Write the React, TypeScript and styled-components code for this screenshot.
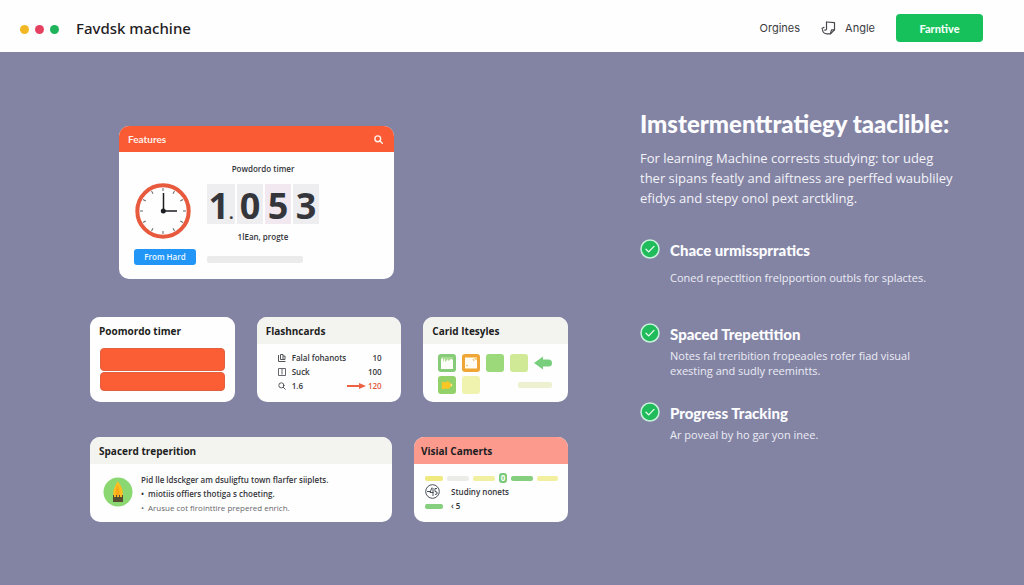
import React from "react";
import styled, { createGlobalStyle } from "styled-components";

const GlobalStyle = createGlobalStyle`
  * { box-sizing: border-box; }
  body {
    margin: 0;
    background: #8384a4;
    color: #26272b;
    font-family: "Open Sans", "Noto Sans", sans-serif;
  }
  h1, h2, h3, p, ul { margin: 0; padding: 0; }
  button { font-family: inherit; border: 0; cursor: pointer; }
`;

const Page = styled.div`
  min-height: 100vh;
  background: #8384a4;
`;

const Header = styled.header`
  display: flex;
  align-items: center;
  height: 52px;
  padding: 4px 41px 0 20px;
  background: #fefefe;
`;

const Dots = styled.div`
  display: flex;
  gap: 6px;
  padding-top: 3px;
`;

const Dot = styled.span<{ $color: string }>`
  width: 9px;
  height: 9px;
  border-radius: 50%;
  background: ${(p) => p.$color};
`;

const Brand = styled.span`
  margin-left: 17px;
  font-family: "Noto Sans", sans-serif;
  font-size: 15px;
  font-weight: 500;
  line-height: 20px;
  color: #1f2023;
`;

const Nav = styled.nav`
  display: flex;
  align-items: center;
  margin-left: auto;
`;

const NavLink = styled.a`
  display: flex;
  align-items: center;
  gap: 9px;
  margin-right: 21px;
  font-family: Inter, sans-serif;
  font-size: 11px;
  line-height: 16px;
  color: #3c3d42;
  text-decoration: none;
`;

const PrimaryButton = styled.button`
  height: 28px;
  width: 87px;
  border-radius: 4px;
  background: #16c15c;
  color: #f3fff7;
  font-family: Lato, sans-serif;
  font-size: 11px;
  font-weight: 900;
`;

const Main = styled.main`
  display: grid;
  grid-template-columns: minmax(0, 478fr) minmax(0, 320fr);
  gap: 72px;
  padding: 56px 64px 64px 90px;
`;

const Board = styled.div`
  display: flex;
  flex-direction: column;
  padding-top: 18px;
`;

const Card = styled.section`
  overflow: hidden;
  border-radius: 10px;
  background: #fefefe;
`;

const FeatureCard = styled(Card)`
  height: 153px;
  margin: 0 174px 38px 29px;
`;

const FeatureHead = styled.div`
  display: flex;
  align-items: center;
  justify-content: space-between;
  height: 26px;
  padding: 0 11px 0 9px;
  background: #fa5b35;
  color: #fff1ea;
`;

const FeatureTitle = styled.h2`
  font-family: Lato, sans-serif;
  font-size: 10px;
  font-weight: 700;
  line-height: 16px;
`;

const IconButton = styled.button`
  display: flex;
  padding: 0;
  background: none;
  color: inherit;
`;

const FeatureBody = styled.div`
  display: grid;
  grid-template-columns: 62px 112px;
  column-gap: 11px;
  padding: 10px 15px;
`;

const ClockColumn = styled.div`
  display: flex;
  flex-direction: column;
  align-items: flex-start;
  padding-top: 21px;
  gap: 10px;
`;

const BlueButton = styled.button`
  width: 62px;
  height: 16px;
  padding: 0;
  border-radius: 3px;
  background: #2196f6;
  color: #eef8ff;
  font-size: 8px;
  font-weight: 600;
  line-height: 16px;
`;

const TimerColumn = styled.div`
  display: flex;
  flex-direction: column;
  align-items: center;
`;

const Caption = styled.p`
  font-size: 8px;
  font-weight: 600;
  line-height: 14px;
  color: #34353a;
`;

const Digits = styled.div`
  display: grid;
  grid-template-columns: 28px repeat(3, 26px);
  gap: 2px;
  margin: 8px 0 6px;
`;

const Digit = styled.span<{ $tint?: string }>`
  height: 40px;
  background: ${(p) => p.$tint ?? "#eeedf0"};
  color: #35363b;
  font-size: 36px;
  font-weight: 700;
  line-height: 43px;
  text-align: center;
  small { font-size: 16px; }
`;

const Placeholder = styled.div`
  align-self: flex-start;
  width: 96px;
  height: 7px;
  margin-top: 12px;
  border-radius: 2px;
  background: #ebebeb;
`;

const TripleRow = styled.div`
  display: grid;
  grid-template-columns: repeat(3, minmax(0, 1fr));
  gap: 22px;
  margin-bottom: 35px;
`;

const DoubleRow = styled.div`
  display: grid;
  grid-template-columns: minmax(0, 302fr) minmax(0, 154fr);
  gap: 22px;
`;

const SmallCard = styled(Card)`
  height: 85px;
`;

const CardTitle = styled.h2<{ $background?: string; $inset?: number }>`
  height: 27px;
  padding: 1px ${(p) => p.$inset ?? 9}px 0;
  background: ${(p) => p.$background ?? "#f3f3f0"};
  color: #1c1d20;
  font-size: 10px;
  font-weight: 700;
  line-height: 27px;
  white-space: nowrap;
`;

const BlockStack = styled.div`
  display: flex;
  flex-direction: column;
  gap: 1px;
  padding: 4px 10px;
`;

const Block = styled.div<{ $height: number }>`
  height: ${(p) => p.$height}px;
  border: 1px solid #e0603f;
  border-radius: 4px;
  background: #fb5d35;
`;

const StatTable = styled.table`
  width: 104px;
  margin: 7px 0 0 21px;
  border-collapse: collapse;
  font-size: 8px;
  font-weight: 600;
  line-height: 14px;
  color: #34353a;
  td { height: 14px; padding: 0; white-space: nowrap; }
  td:first-child { width: 14px; }
  td:last-child { text-align: right; }
  svg { display: block; }
`;

const Total = styled.span`
  display: flex;
  align-items: center;
  justify-content: flex-end;
  gap: 2px;
  color: #e2583c;
`;

const Swatches = styled.div`
  display: grid;
  grid-template-columns: repeat(5, 18px);
  gap: 4px 6px;
  padding: 10px 0 0 15px;
`;

const Swatch = styled.span<{ $color: string; $border?: string }>`
  display: flex;
  align-items: center;
  justify-content: center;
  height: 18px;
  border: 3px solid ${(p) => p.$border ?? p.$color};
  border-radius: 3px;
  background: ${(p) => p.$color};
`;

const ArrowCell = styled.span`
  display: flex;
  align-items: center;
`;

const SwatchBar = styled.span`
  grid-column: 4 / 6;
  align-self: center;
  justify-self: end;
  width: 34px;
  height: 6px;
  border-radius: 2px;
  background: #eef1d0;
`;

const Note = styled.div`
  display: flex;
  gap: 8px;
  padding: 9px 12px 0 13px;
  font-size: 8px;
  font-weight: 600;
  line-height: 14px;
  color: #34353a;
  white-space: nowrap;
  svg { flex: none; margin-top: 4px; }
`;

const NoteList = styled.ul`
  list-style: none;
  li::before { content: "•"; margin-right: 4px; }
  li:last-child { color: #66676c; font-weight: 400; }
`;

const Segments = styled.div`
  display: grid;
  grid-template-columns: 18px 22px 22px 8px 22px 21px;
  align-items: center;
  justify-content: space-between;
  height: 12px;
  margin: 8px 10px 0 11px;
`;

const Segment = styled.span<{ $color: string }>`
  height: 5px;
  border-radius: 2px;
  background: ${(p) => p.$color};
`;

const Knob = styled.span`
  height: 10px;
  border-radius: 3px;
  background: #79c878;
  color: #ffffff;
  font-size: 8px;
  font-weight: 700;
  line-height: 10px;
  text-align: center;
`;

const Legend = styled.div`
  display: grid;
  grid-template-columns: 18px 1fr;
  align-items: center;
  column-gap: 8px;
  padding: 0 11px;
  font-size: 8px;
  font-weight: 600;
  line-height: 14px;
  color: #34353a;
`;

const Copy = styled.div`
  color: #fdfdff;
`;

const Title = styled.h1`
  font-family: Lato, sans-serif;
  font-size: 24px;
  font-weight: 900;
  line-height: 32px;
  white-space: nowrap;
`;

const Intro = styled.p`
  margin-top: 8px;
  color: #f3f3f8;
  font-size: 13px;
  font-weight: 500;
  line-height: 20px;
  white-space: nowrap;
`;

const Feature = styled.article<{ $top: number; $gap?: number }>`
  display: grid;
  grid-template-columns: 20px 1fr;
  column-gap: 10px;
  row-gap: ${(p) => p.$gap ?? 4}px;
  margin-top: ${(p) => p.$top}px;
`;

const FeatureName = styled.h3`
  padding-top: 1px;
  font-family: Lato, sans-serif;
  font-size: 15px;
  font-weight: 900;
  line-height: 20px;
  white-space: nowrap;
`;

const FeatureText = styled.p`
  grid-column: 2;
  color: #ececf4;
  font-size: 11px;
  line-height: 15px;
  white-space: nowrap;
`;

const CheckIcon = () => (
  <svg width="20" height="20" viewBox="0 0 20 20" fill="none" aria-hidden="true">
    <circle cx="10" cy="10" r="9" fill="#20bb5a" stroke="#c9f2dc" strokeWidth="1.5" />
    <path d="M6 10.3l2.7 2.6L14 7.4" stroke="#e9fff1" strokeWidth="1.3" strokeLinecap="round" strokeLinejoin="round" />
  </svg>
);

const NoteIcon = () => (
  <svg width="15" height="14" viewBox="0 0 15 14" fill="none" stroke="#47484d" strokeWidth="1.2" strokeLinejoin="round" strokeLinecap="round" aria-hidden="true">
    <path d="M5.500 1l8 .7v7.200L9.500 12.800H6C3.500 12.800 1.500 11 1.500 8.500" />
    <path d="M5.500 1v5.500q.5 3-2 2.500M1 7.500l2-1.200M13.500 8.900H10.500L9.500 12.500" />
  </svg>
);

const SearchIcon = ({ size = 9, width = 1.6 }: { size?: number; width?: number }) => (
  <svg width={size} height={size} viewBox="0 0 10 10" fill="none" stroke="currentColor" strokeWidth={width} strokeLinecap="round" aria-hidden="true">
    <circle cx="4.200" cy="4.200" r="3.200" />
    <path d="M6.700 6.700L9.200 9.200" />
  </svg>
);

const ticks = Array.from({ length: 12 }, (_, i) => i * 30);

const Clock = () => (
  <svg width="58" height="56" viewBox="-1 0 58 56" fill="none" role="img" aria-label="Clock at three">
    <circle cx="28" cy="28" r="25.700" fill="#fefefe" stroke="#e75a3e" strokeWidth="4" />
    {ticks.map((a) => (
      <path key={a} d="M28 5v3" stroke="#66676b" transform={`rotate(${a} 28 28)`} />
    ))}
    <path d="M28.500 10v18H42" stroke="#1d1e22" strokeWidth="1.500" />
    <circle cx="28.300" cy="28" r="2.500" fill="#1d1e22" />
  </svg>
);

const StackIcon = () => (
  <svg width="8" height="8" viewBox="0 0 8 8" fill="none" stroke="#55565b" aria-hidden="true">
    <path d="M.5 1v6.500H7.500M2.500.5h2.500v5H2.500zM5 2h2v3.500H5" />
  </svg>
);

const BookIcon = () => (
  <svg width="8" height="8" viewBox="0 0 8 8" fill="none" stroke="#66676c" aria-hidden="true">
    <path d="M.5 .5h7v7h-7zM4 .5v6" />
  </svg>
);

const RightArrow = () => (
  <svg width="19" height="6" viewBox="0 0 19 6" aria-hidden="true">
    <path d="M0 2h12V0l7 3-7 3V4H0z" fill="#ed6242" />
  </svg>
);

const LeftArrow = () => (
  <svg width="18" height="14" viewBox="0 0 18 14" aria-hidden="true">
    <path d="M0 7l9-6.500v3H14.500q3.500 0 3.500 3.500t-3.500 3.500H9v3z" fill="#77cf7d" />
  </svg>
);

const Crayons = () => (
  <svg width="12" height="12" viewBox="0 0 12 12" aria-hidden="true">
    <path d="M0 12V2l2-1v4l2-4v4l3-3v2l3-2 2 1v9z" fill="#fbfdf6" />
  </svg>
);

const Picture = () => (
  <svg width="12" height="12" viewBox="0 0 12 12" aria-hidden="true">
    <path d="M0 1h9l1 2h2v8H0z" fill="#fffdf6" />
    <path d="M1 8l2 1M8 2l1 2" stroke="#efb14f" />
  </svg>
);

const Fish = () => (
  <svg width="14" height="14" viewBox="0 0 14 14" aria-hidden="true">
    <path d="M1 3l4 1q3-3 6 1l3 2-3 2q-2 4-5 2l-5 1z" fill="#f9c827" />
    <path d="M12 5.500v3" stroke="#fff8cf" />
  </svg>
);

const Candle = () => (
  <svg width="30" height="30" viewBox="0 0 30 30" aria-hidden="true">
    <circle cx="15" cy="15" r="14.500" fill="#8bd873" />
    <path d="M14.500 4q4 5 5 9l.5 7h-10l.5-7z" fill="#fbbd20" />
    <path d="M14.500 8q2.500 5 2 11h-4q-.5-6 2-11z" fill="#fda619" />
    <path d="M10 18h1v2h2v-2h1v2h2v-2h1v2h2v-2h1v7h-10z" fill="#544b30" />
  </svg>
);

const BadgeIcon = () => (
  <svg width="15" height="15" viewBox="0 0 15 15" fill="none" stroke="#46505a" aria-hidden="true">
    <circle cx="7.500" cy="7.500" r="6.800" />
    <path d="M2 7.500h3.500M7 3.500L5 8.500h3.500M8 4v8M12 4.500H10v3q3 0 2 2.500l-2 .5" />
  </svg>
);

export default function App() {
  return (
    <Page>
      <GlobalStyle />
      <Header>
        <Dots>
          <Dot $color="#f2b824" />
          <Dot $color="#e5405f" />
          <Dot $color="#1fb45c" />
        </Dots>
        <Brand>Favdsk machine</Brand>
        <Nav>
          <NavLink href="#orgines">Orgines</NavLink>
          <NavLink href="#angle"><NoteIcon />Angle</NavLink>
          <PrimaryButton type="button">Farntive</PrimaryButton>
        </Nav>
      </Header>

      <Main>
        <Board>
          <FeatureCard>
            <FeatureHead>
              <FeatureTitle>Features</FeatureTitle>
              <IconButton type="button" aria-label="Search"><SearchIcon /></IconButton>
            </FeatureHead>
            <FeatureBody>
              <ClockColumn>
                <Clock />
                <BlueButton type="button">From Hard</BlueButton>
              </ClockColumn>
              <TimerColumn>
                <Caption>Powdordo timer</Caption>
                <Digits>
                  <Digit>1<small>.</small></Digit>
                  <Digit>0</Digit>
                  <Digit $tint="#f1e8f0">5</Digit>
                  <Digit>3</Digit>
                </Digits>
                <Caption>1lEan, progte</Caption>
                <Placeholder />
              </TimerColumn>
            </FeatureBody>
          </FeatureCard>

          <TripleRow>
            <SmallCard>
              <CardTitle $background="#fefefe">Poomordo timer</CardTitle>
              <BlockStack>
                <Block $height={23} />
                <Block $height={19} />
              </BlockStack>
            </SmallCard>
            <SmallCard>
              <CardTitle>Flashncards</CardTitle>
              <StatTable>
                <tbody>
                  <tr><td><StackIcon /></td><td>Falal fohanots</td><td>10</td></tr>
                  <tr><td><BookIcon /></td><td>Suck</td><td>100</td></tr>
                  <tr><td><SearchIcon size={8} width={1} /></td><td>1.6</td><td><Total><RightArrow />120</Total></td></tr>
                </tbody>
              </StatTable>
            </SmallCard>
            <SmallCard>
              <CardTitle>Carid Itesyles</CardTitle>
              <Swatches>
                <Swatch $color="#a9dc92" $border="#86cc78"><Crayons /></Swatch>
                <Swatch $color="#f8d28b" $border="#efa636"><Picture /></Swatch>
                <Swatch $color="#9bd97b" />
                <Swatch $color="#cfe996" />
                <ArrowCell><LeftArrow /></ArrowCell>
                <Swatch $color="#93d26b"><Fish /></Swatch>
                <Swatch $color="#f0f3ae" />
                <SwatchBar />
              </Swatches>
            </SmallCard>
          </TripleRow>

          <DoubleRow>
            <SmallCard>
              <CardTitle>Spacerd treperition</CardTitle>
              <Note>
                <Candle />
                <div>
                  <p>Pid lle ldsckger am dsuligftu town flarfer siiplets.</p>
                  <NoteList>
                    <li>miotiis offiers thotiga s choeting.</li>
                    <li>Arusue cot firointtire prepered enrich.</li>
                  </NoteList>
                </div>
              </Note>
            </SmallCard>
            <SmallCard>
              <CardTitle $background="#fd9a8e" $inset={7}>Visial Camerts</CardTitle>
              <Segments>
                <Segment $color="#efe97e" />
                <Segment $color="#ebebe8" />
                <Segment $color="#f0f0a0" />
                <Knob>0</Knob>
                <Segment $color="#86cf7e" />
                <Segment $color="#f2f09f" />
              </Segments>
              <Legend>
                <BadgeIcon />
                <span>Studiny nonets</span>
                <Segment $color="#86cf7e" />
                <span>‹ 5</span>
              </Legend>
            </SmallCard>
          </DoubleRow>
        </Board>

        <Copy>
          <Title>Imstermenttratiegy taaclible:</Title>
          <Intro>
            For learning Machine corrests studying: tor udeg<br />
            ther sipans featly and aiftness are perffed waubliley<br />
            efidys and stepy onol pext arctkling.
          </Intro>
          <Feature $top={31} $gap={10}>
            <CheckIcon />
            <FeatureName>Chace urmissprratics</FeatureName>
            <FeatureText>Coned repectltion frelpportion outbls for splactes.</FeatureText>
          </Feature>
          <Feature $top={38}>
            <CheckIcon />
            <FeatureName>Spaced Trepettition</FeatureName>
            <FeatureText>
              Notes fal treribition fropeaoles rofer fiad visual<br />
              exesting and sudly reemintts.
            </FeatureText>
          </Feature>
          <Feature $top={24}>
            <CheckIcon />
            <FeatureName>Progress Tracking</FeatureName>
            <FeatureText>Ar poveal by ho gar yon inee.</FeatureText>
          </Feature>
        </Copy>
      </Main>
    </Page>
  );
}
